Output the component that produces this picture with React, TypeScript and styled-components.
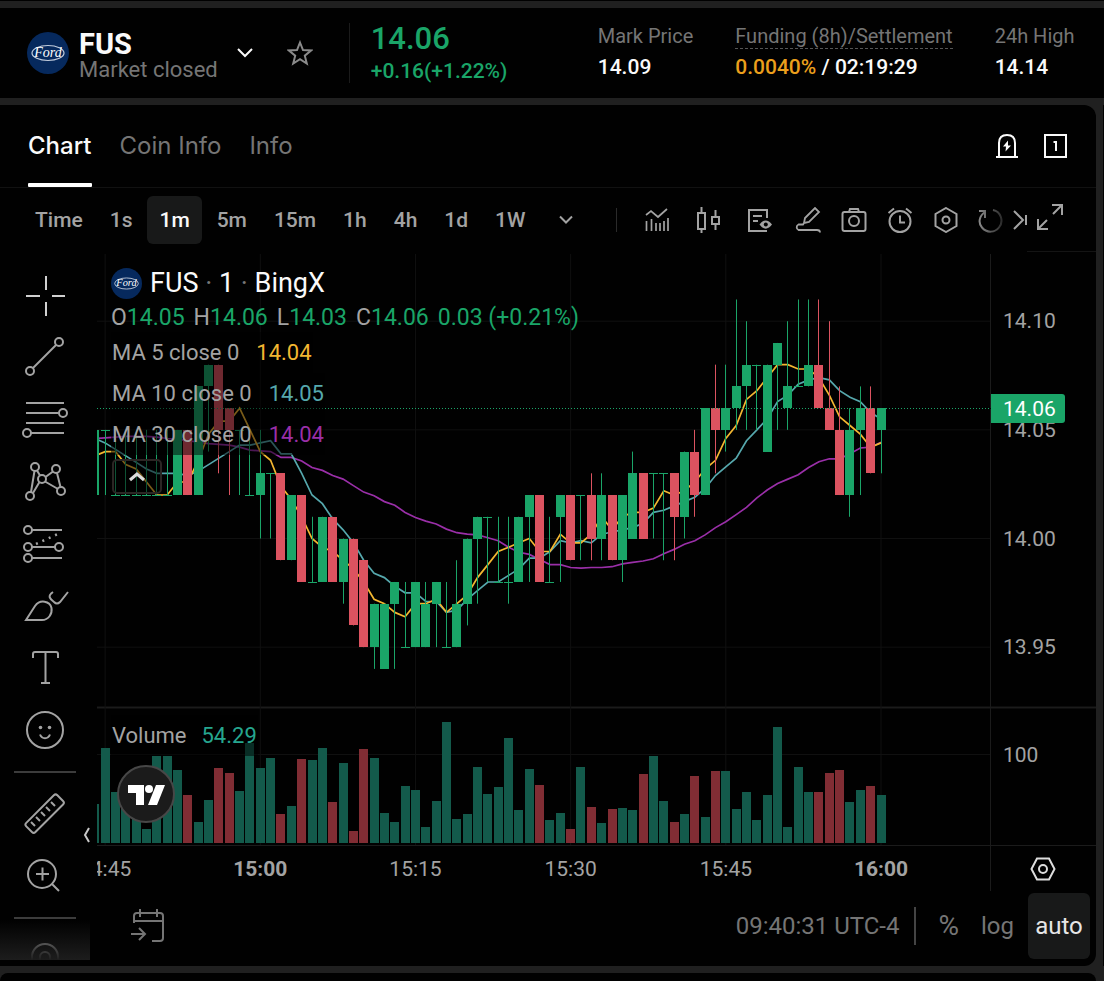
import React from "react";
import styled, { createGlobalStyle, css } from "styled-components";

const color = {
  gap: "#202020",
  panel: "#010101",
  line: "#1b1b1b",
  grid: "#101010",
  raised: "#181919",
  white: "#fafafa",
  text: "#a3a3a3",
  muted: "#757575",
  up: "#1aa568",
  down: "#dc5360",
  volUp: "#135a4b",
  volDown: "#812d34",
  ma5: "#f3b731",
  ma10: "#56a8ad",
  ma30: "#9a2fa8",
  orange: "#eb9f1c",
};

const GlobalStyle = createGlobalStyle`
  * { box-sizing: border-box; }
  body {
    margin: 0;
    background: ${color.gap};
    color: ${color.text};
    font-family: Roboto, "Liberation Sans", sans-serif;
    font-size: 22px;
    line-height: 28px;
  }
  button {
    font: inherit;
    color: inherit;
    background: none;
    border: 0;
    padding: 0;
    cursor: pointer;
  }
  svg { display: block; flex: none; }
`;

/* ---------- market data: cents above 14.00, volume in plot pixels ---------- */

type Candle = [open: number, high: number, low: number, close: number, volume: number];

const candles: Candle[] = [
  [2, 5, 2, 5, 39], [5, 5, 2, 5, 95], [2, 5, 2, 2, 51], [2, 5, 2, 2, 45], [2, 5, 2, 2, 38],
  [2, 5, 2, 2, 14], [2, 5, 2, 2, 87], [2, 5, 2, 2, 87], [2, 5, 2, 5, 73], [5, 5, 2, 2, 48],
  [2, 7, 2, 7, 21], [7, 8, 4, 8, 43], [8, 8, 3, 5, 75], [6, 6, 2, 5, 70], [5, 5, 2, 5, 52],
  [2, 5, 2, 2, 100], [2, 5, 0, 3, 75], [3, 3, 0, 3, 85], [3, 3, -1, -1, 29], [-1, 2, -1, 2, 37],
  [2, 2, -2, -2, 84], [-2, 1, -2, -2, 83], [-2, 1, -2, 1, 95], [1, 1, -2, -2, 41], [-2, 0, -3, 0, 80],
  [0, 0, -4, -4, 12], [-1, -1, -5, -5, 94], [-5, -3, -6, -3, 85], [-6, -3, -6, -3, 30], [-3, -2, -6, -2, 21],
  [-5, -2, -5, -5, 57], [-5, -2, -5, -2, 53], [-5, -2, -5, -3, 16], [-3, -2, -5, -2, 42], [-5, -2, -5, -5, 121],
  [-5, -1, -5, -3, 24], [-3, 0, -4, 0, 29], [0, 1, -3, 1, 76], [1, 1, -2, 1, 49], [-2, 1, -2, -2, 56],
  [-2, 1, -3, -2, 105], [-2, 1, -2, 1, 33], [1, 2, -2, 2, 74], [2, 2, -2, -2, 58], [-2, 1, -2, -2, 23],
  [1, 2, -2, 2, 30], [2, 2, -1, -1, 14], [2, 2, -1, 2, 76], [2, 3, -1, 0, 36], [0, 3, -1, 2, 20],
  [2, 2, -1, -1, 34], [-1, 2, -2, 2, 35], [0, 4, 0, 3, 33], [3, 3, 0, 0, 69], [3, 3, 0, 3, 87],
  [3, 3, -1, 3, 42], [3, 3, -1, 1, 21], [1, 4, 0, 4, 29], [4, 5, 1, 2, 67], [2, 6, 2, 6, 26],
  [6, 8, 3, 5, 72], [5, 8, 4, 6, 72], [6, 11, 5, 7, 34], [7, 10, 5, 8, 51], [8, 8, 5, 8, 23],
  [4, 8, 4, 8, 48], [8, 9, 5, 9, 116], [6, 10, 5, 7, 16], [7, 11, 7, 7, 76], [7, 11, 7, 8, 51],
  [8, 11, 6, 6, 51], [6, 10, 5, 5, 70], [5, 7, 2, 2, 73], [2, 6, 1, 5, 41], [5, 7, 2, 6, 53],
  [6, 7, 3, 3, 57], [5, 6, 3, 6, 48],
];

/* closes of the minutes before the first candle, oldest first */
const earlierCloses = [
  4, 1, 1, 2, 2, 3, 4, 6, 4, 9, 10, 6, 6, 8, 6, 4, 4, 7, 2, 3, 7, 5, 5, 5, 5, 4, 2, 5, 3,
];

const STEP = 10.345;
const LAST_X = -215;
const AXIS_X = -106;
const SPLIT_Y = 453;
const VOLUME_BASE = 589;
const HEIGHT = 637;

const xAt = (i: number) => LAST_X - (candles.length - 1 - i) * STEP;
const yAt = (cents: number) => 284.5 - cents * 21.73;

const closes = [...earlierCloses, ...candles.map((c) => c[3])];

function average(period: number) {
  return candles
    .map((_, i) => {
      const end = i + earlierCloses.length + 1;
      const part = closes.slice(Math.max(0, end - period), end);
      const mean = part.reduce((a, b) => a + b, 0) / part.length;
      return `${xAt(i).toFixed(1)},${yAt(mean).toFixed(1)}`;
    })
    .join(" ");
}

const timeMarks = [
  { label: "14:45", i: 1 },
  { label: "15:00", i: 16, bold: true },
  { label: "15:15", i: 31 },
  { label: "15:30", i: 46 },
  { label: "15:45", i: 61 },
  { label: "16:00", i: 76, bold: true },
];

const priceMarks = [
  { label: "14.10", cents: 10 },
  { label: "14.05", cents: 5 },
  { label: "14.00", cents: 0 },
  { label: "13.95", cents: -5 },
];

const PlotSvg = styled.svg`
  width: 100%;
  height: ${HEIGHT}px;
  font-size: 21px;
  fill: ${color.text};
`;

function Plot() {
  return (
    <PlotSvg role="img" aria-label="FUS price and volume">
      {priceMarks.map((m) => (
        <line key={m.label} x1="0" x2="100%" y1={yAt(m.cents)} y2={yAt(m.cents)} stroke={color.grid} />
      ))}
      <line x1="0" x2="100%" y1="500.5" y2="500.5" stroke={color.grid} />
      <line x1="0" x2="100%" y1={SPLIT_Y + 0.5} y2={SPLIT_Y + 0.5} stroke={color.line} strokeWidth="2" />
      <line x1="0" x2="100%" y1="591.5" y2="591.5" stroke={color.line} />
      <svg x="100%" overflow="visible">
        {timeMarks.map((m) => (
          <line key={m.label} x1={xAt(m.i)} x2={xAt(m.i)} y1="0" y2="591" stroke={color.grid} />
        ))}
        <g fill="none" strokeWidth="1.700">
          <polyline points={average(30)} stroke={color.ma30} />
          <polyline points={average(10)} stroke={color.ma10} />
          <polyline points={average(5)} stroke={color.ma5} />
        </g>
        {candles.map(([open, high, low, close, volume], i) => {
          const down = close < open;
          const x = Math.floor(xAt(i));
          const top = Math.round(yAt(Math.max(open, close)));
          const bottom = Math.round(yAt(Math.min(open, close)));
          return (
            <g key={i} fill={down ? color.down : color.up}>
              <rect x={x} y={yAt(high)} width="1" height={yAt(low) - yAt(high)} />
              <rect x={x - 4} y={top} width="9" height={Math.max(bottom - top, 1)} />
              <rect
                x={x - 4}
                y={VOLUME_BASE - volume}
                width="9"
                height={volume}
                fill={down ? color.volDown : color.volUp}
              />
            </g>
          );
        })}
        <rect x={AXIS_X} y="0" width="106" height="591" fill={color.panel} />
        <line x1={AXIS_X + 0.5} x2={AXIS_X + 0.5} y1="0" y2={HEIGHT} stroke={color.line} />
        <line x1={AXIS_X} x2="0" y1={SPLIT_Y + 0.5} y2={SPLIT_Y + 0.5} stroke={color.line} strokeWidth="2" />
        {priceMarks.map((m) => (
          <text key={m.label} x="-93" y={yAt(m.cents) + 7}>{m.label}</text>
        ))}
        <text x="-93" y="508">100</text>
        {timeMarks.map((m) => (
          <text key={m.label} x={xAt(m.i)} y="622" textAnchor="middle" fontWeight={m.bold ? 700 : 400}>
            {m.label}
          </text>
        ))}
      </svg>
      <line x1="0" x2="100%" y1="154.5" y2="154.5" stroke={color.up} strokeDasharray="1 2" />
      <svg x="100%" overflow="visible">
        <rect x={AXIS_X} y="154" width="106" height="1" fill={color.panel} />
        <path d="M-105 140h71a3 3 0 0 1 3 3v23a3 3 0 0 1-3 3h-71z" fill={color.up} />
        <text x="-93" y="162" fill="#fff">14.06</text>
      </svg>
    </PlotSvg>
  );
}

/* ---------- icons ---------- */

type IconProps = { w?: number; h?: number; stroke?: number; children: React.ReactNode };

function Icon({ w = 26, h = 26, stroke = 2, children }: IconProps) {
  return (
    <svg width={w} height={h} viewBox={`0 0 ${w} ${h}`} fill="none" stroke="currentColor" strokeWidth={stroke} aria-hidden="true">
      {children}
    </svg>
  );
}

function Brand({ size }: { size: number }) {
  return (
    <svg width={size} height={size} viewBox="0 0 42 42" aria-hidden="true">
      <circle cx="21" cy="21" r="21" fill="#06295d" />
      <ellipse cx="21" cy="21" rx="16" ry="7.5" fill="none" stroke="#c3cddd" strokeWidth="1.200" />
      <text x="21" y="25" textAnchor="middle" fontFamily="Liberation Serif, serif" fontStyle="italic" fontSize="14" fill="#fff">
        Ford
      </text>
    </svg>
  );
}

const barIcons = [
  {
    name: "Indicators", width: 52,
    art: <Icon><path d="M2 8l5-4 7 6 9-8M2.500 14v10M7.500 12v12M12 16v8M16 16v8M20 14v10M24 11v13" strokeWidth="1.700" /></Icon>,
  },
  {
    name: "Candle style", width: 52,
    art: <Icon><path d="M2 6h7v16H2zM5.500 0v6M5.500 22v4M16 10h7v7h-7zM19.500 3v7M19.500 17v6" /></Icon>,
  },
  {
    name: "Templates", width: 50,
    art: <Icon><path d="M20 11V3H2v21h18M6 9h9M6 14h5" /><path d="M12.500 17.500c4-5.500 8.500-5.500 12.500 0-4 5.500-8.500 5.500-12.500 0z" fill="currentColor" stroke="none" /><circle cx="18.800" cy="17.500" r="2" fill="#010101" stroke="none" /></Icon>,
  },
  {
    name: "Draw",
    art: <Icon><path d="M9 16l1-5L20 1l4 4-10 10zM9 16l-1 1.500H3.500a3 3 0 0 0 0 5.500H22q3 0 3 2.500" strokeWidth="1.800" /></Icon>,
  },
  {
    name: "Screenshot",
    art: <Icon><rect x="1.500" y="5" width="23" height="19" rx="2" /><path d="M8 5l1-3h8l1 3" /><circle cx="13" cy="14" r="5" /></Icon>,
  },
  {
    name: "Alert",
    art: <Icon><circle cx="13" cy="14.500" r="10.500" /><path d="M13 8.500v7h5M1.500 6L7 1.500M24.500 6L19 1.500" /></Icon>,
  },
  {
    name: "Settings",
    art: <Icon><path d="M13 1l10.500 6v12L13 25 2.500 19V7z" /><circle cx="13" cy="13" r="3.500" /></Icon>,
  },
];

const toolIcons = [
  { name: "Crosshair", art: <path d="M6 21h14M32 21h13M26 1v14M26 27v14" stroke="#d0d0d0" /> },
  { name: "Trend line", art: <><circle cx="39" cy="5" r="4" /><circle cx="10" cy="34" r="4" /><path d="M13 31L36 8" /></> },
  { name: "Fib retracement", art: <><path d="M6 4h38M6 14h33M6 24h38M11 34h33" /><circle cx="43" cy="14" r="4" /><circle cx="7" cy="34" r="4" /></> },
  { name: "Pattern", art: <><circle cx="15" cy="6" r="4" /><circle cx="36" cy="8" r="4" /><circle cx="22" cy="18" r="4" /><circle cx="41" cy="30" r="4" /><circle cx="10" cy="35" r="4" /><path d="M14.500 10L11 31M17 9.500l3 5M25.500 16L33 10.500M37 12l3.500 14M25 20.500L38 28M19.500 21L13 32" /></> },
  { name: "Prediction", art: <><circle cx="8" cy="7" r="4" /><circle cx="8" cy="24" r="4" /><circle cx="39" cy="24" r="4" /><circle cx="8" cy="35" r="4" /><path d="M12 7h30M12 24h23M12 35h30" /><path d="M16 21L40 10" strokeDasharray="2 5" strokeWidth="2.500" /></> },
  { name: "Brush", art: <path d="M6 35L15 21c5-7 15-5 16.500 2 1 6-3 12-9.500 12zM33 7c-6 4-3 7 1 10 2 2 4 2 6 0L48 7" /> },
  { name: "Text", art: <path d="M13 11V7q0-2 2-2h21q2 0 2 2v4M25.500 5v31M21 36h9" /> },
  { name: "Emoji", art: <><circle cx="25" cy="21" r="18" /><path d="M20 25.500c2 5 8 5 10 0" /><circle cx="20.500" cy="18.500" r="1.800" fill="currentColor" stroke="none" /><circle cx="29.500" cy="18.500" r="1.800" fill="currentColor" stroke="none" /></> },
];

const lowerTools = [
  { name: "Measure", art: <><rect x="3" y="14" width="44" height="13" rx="2.500" transform="rotate(-45 25 21)" /><path d="M11 29l4 4M16 24l4 4M21 19l4 4M26 14l4 4M31 9l4 4" /></> },
  { name: "Zoom", art: <><circle cx="22" cy="19" r="14" /><path d="M16 19h13M22.500 12.500v13M32 29l7 7" /></> },
];

/* ---------- page parts ---------- */

const Page = styled.div`
  min-height: 100vh;
  display: flex;
  flex-direction: column;
  gap: 7px;
  padding-top: 7px;
  border-top: 1px solid #000;
  overflow: hidden;
`;

const Header = styled.header`
  display: flex;
  align-items: center;
  height: 90px;
  flex: none;
  padding-left: 27px;
  background: ${color.panel};
  white-space: nowrap;
`;

const Pair = styled.div`
  display: flex;
  align-items: center;
  gap: 10px;
`;

const PairText = styled.div`
  padding-top: 5px;
`;

const PairName = styled.h1`
  margin: 0;
  font-size: 29px;
  line-height: 28px;
  font-weight: 700;
  color: ${color.white};
`;

const PairState = styled.p`
  margin: 0;
  line-height: 24px;
  color: ${color.muted};
`;

const HeaderButton = styled.button<{ $dim?: boolean }>`
  display: flex;
  justify-content: center;
  width: 55px;
  color: ${(p) => (p.$dim ? "#8a8a8a" : color.white)};
`;

const Price = styled.div`
  margin-left: 21px;
  width: 249px;
  height: 60px;
  padding-left: 21px;
  border-left: 1px solid ${color.line};
  color: ${color.up};
  font-weight: 500;
`;

const PriceNow = styled.div`
  font-size: 31px;
  line-height: 32px;
`;

const PriceChange = styled.div`
  font-size: 21px;
  line-height: 32px;
`;

const Stats = styled.dl`
  display: flex;
  gap: 42px;
  margin: 0;
  font-size: 20px;
`;

const StatLabel = styled.dt<{ $dashed?: boolean }>`
  line-height: 24px;
  color: ${color.muted};
  border-bottom: 1px ${(p) => (p.$dashed ? "dashed #555" : "solid transparent")};
`;

const StatValue = styled.dd`
  margin: 0;
  padding: 4px 0 2px;
  font-size: 21px;
  line-height: 28px;
  font-weight: 500;
  color: ${color.white};
`;

const Rate = styled.span`
  color: ${color.orange};
`;

const Workspace = styled.div`
  display: grid;
  grid-template-columns: minmax(0, 1fr) 1px;
  gap: 7px;
`;

const Side = styled.aside`
  background: ${color.panel};
`;

const Panel = styled.main`
  background: ${color.panel};
  border-radius: 0 12px 12px 0;
  padding-bottom: 6px;
  overflow: hidden;
`;

const NextPanel = styled.section`
  flex: 1;
  min-height: 8px;
  margin-right: 8px;
  background: ${color.panel};
  border-radius: 12px 12px 0 0;
`;

const TabBar = styled.nav`
  display: flex;
  align-items: stretch;
  gap: 28px;
  height: 83px;
  padding: 0 27px 0 28px;
  border-bottom: 1px solid #111;
`;

const Tab = styled.button<{ $active?: boolean }>`
  position: relative;
  font-family: Inter, Roboto, sans-serif;
  font-size: 24px;
  font-weight: ${(p) => (p.$active ? 500 : 400)};
  color: ${(p) => (p.$active ? color.white : color.muted)};
  ${(p) =>
    p.$active &&
    css`
      &::after {
        content: "";
        position: absolute;
        left: 0;
        right: 0;
        bottom: 0;
        height: 4px;
        border-radius: 1px;
        background: #fff;
      }
    `}
`;

const TabActions = styled.div`
  display: flex;
  align-items: center;
  gap: 24px;
  margin-left: auto;
  color: ${color.white};
`;

const ChartBar = styled.div`
  display: flex;
  align-items: center;
  height: 66px;
  padding: 0 0 2px 23px;
`;

const Intervals = styled.div`
  display: flex;
  gap: 3px;
`;

const Interval = styled.button<{ $active?: boolean }>`
  height: 48px;
  padding: 0 12px;
  border-radius: 6px;
  background: ${(p) => (p.$active ? color.raised : "none")};
  color: ${(p) => (p.$active ? color.white : color.text)};
  font-size: 21px;
  font-weight: 500;
`;

const BarDivider = styled.span`
  width: 1px;
  height: 24px;
  margin: 0 14px 0 22px;
  background: #2a2a2a;
`;

const BarButton = styled.button<{ $width?: number }>`
  display: flex;
  justify-content: center;
  width: ${(p) => p.$width ?? 46}px;
`;

const ExpandCell = styled.div`
  display: flex;
  align-items: center;
  align-self: stretch;
  width: 69px;
  margin-left: auto;
  padding: 0 0 6px 10px;
  border-bottom: 1px solid #141414;
`;

const Body = styled.div`
  display: grid;
  grid-template-columns: 90px minmax(0, 1fr);
  height: 706px;
`;

const Tools = styled.div`
  position: relative;
  padding-top: 11px;
  overflow: hidden;
`;

const Tool = styled.button`
  display: flex;
  align-items: center;
  justify-content: center;
  width: 90px;
  height: 62px;
`;

const ToolDivider = styled.hr`
  width: 62px;
  height: 2px;
  margin: 10px 14px;
  border: 0;
  background: #3c3c3c;
`;

const ToolFade = styled.div`
  position: absolute;
  left: 0;
  right: 0;
  bottom: 0;
  height: 40px;
  background: linear-gradient(transparent, #1d1d1d);
`;

const ChartColumn = styled.div`
  position: relative;
  padding-left: 7px;
`;

const Collapse = styled.button`
  position: absolute;
  left: -8px;
  top: 572px;
  color: #c8c8c8;
`;

const Legend = styled.div`
  position: absolute;
  left: 21px;
  top: 13px;
  display: flex;
  flex-direction: column;
  align-items: flex-start;
  white-space: nowrap;
`;

const Title = styled.h2`
  display: flex;
  align-items: center;
  gap: 8px;
  margin: 0;
  font-size: 27px;
  font-weight: 400;
  line-height: 32px;
  color: ${color.white};
`;

const Dot = styled.span`
  color: #777;
`;

const Quote = styled.div`
  display: flex;
  gap: 9px;
  margin-top: 4px;
  font-size: 23px;
  line-height: 29px;
`;

const Tint = styled.span<{ $c: string }>`
  color: ${(p) => p.$c};
`;

const Study = styled.div`
  display: flex;
  gap: 17px;
  padding: 0 1px;
  line-height: 41px;
  background: rgba(0, 0, 0, 0.5);
`;

const Fold = styled.button`
  display: flex;
  align-items: center;
  justify-content: center;
  width: 50px;
  height: 35px;
  margin: 4px 1px;
  border: 2px solid #2b2624;
  border-radius: 5px;
  background: rgba(0, 0, 0, 0.5);
  color: #ddd;
`;

const VolumeLegend = styled(Study)`
  position: absolute;
  left: 21px;
  top: 461px;
  gap: 15px;
`;

const Watermark = styled.a`
  position: absolute;
  left: 27px;
  top: 511px;
`;

const AxisSettings = styled.button`
  position: absolute;
  right: 40px;
  top: 602px;
  color: #ddd;
`;

const Footer = styled.footer`
  display: flex;
  align-items: center;
  height: 69px;
  padding: 0 6px 0 34px;
  font-size: 24px;
  color: ${color.muted};
`;

const Clock = styled.button`
  margin-left: auto;
  padding-right: 15px;
  border-right: 2px solid #444;
  line-height: 38px;
`;

const Scale = styled.button<{ $active?: boolean; $large?: boolean }>`
  height: 66px;
  margin-left: ${(p) => (p.$active ? 14 : 22)}px;
  font-size: ${(p) => (p.$large ? 28 : 24)}px;
  ${(p) =>
    p.$active &&
    css`
      width: 62px;
      border-radius: 6px;
      background: ${color.raised};
      color: #e6e6e6;
    `}
`;

const stats = [
  { label: "Mark Price", value: "14.09" },
  { label: "Funding (8h)/Settlement", value: " / 02:19:29", rate: "0.0040%", dashed: true },
  { label: "24h High", value: "14.14" },
];

const studies = [
  { name: "MA 5 close 0", value: "14.04", tint: color.ma5 },
  { name: "MA 10 close 0", value: "14.05", tint: color.ma10 },
  { name: "MA 30 close 0", value: "14.04", tint: color.ma30 },
];

export default function App() {
  return (
    <Page>
      <GlobalStyle />
      <Header>
        <Pair>
          <Brand size={42} />
          <PairText>
            <PairName>FUS</PairName>
            <PairState>Market closed</PairState>
          </PairText>
        </Pair>
        <HeaderButton aria-label="Choose market">
          <Icon w={18} h={12} stroke={2}><path d="M2 2l7 7 7-7" /></Icon>
        </HeaderButton>
        <HeaderButton aria-label="Favourite" $dim>
          <Icon><path d="M13 2.500l3 7.500 8 .5-6.200 5.200 2 7.800L13 19.200 6.200 23.500l2-7.800L2 10.500l8-.5z" /></Icon>
        </HeaderButton>
        <Price>
          <PriceNow>14.06</PriceNow>
          <PriceChange>+0.16(+1.22%)</PriceChange>
        </Price>
        <Stats>
          {stats.map((s) => (
            <div key={s.label}>
              <StatLabel $dashed={s.dashed}>{s.label}</StatLabel>
              <StatValue>
                {s.rate && <Rate>{s.rate}</Rate>}
                {s.value}
              </StatValue>
            </div>
          ))}
        </Stats>
      </Header>

      <Workspace>
        <Panel>
          <TabBar>
            <Tab $active>Chart</Tab>
            <Tab>Coin Info</Tab>
            <Tab>Info</Tab>
            <TabActions>
              <button aria-label="Price alert">
                <Icon w={24} h={26}>
                  <path d="M4 23V10q0-8 8-8t8 8v13M1 24h22" />
                  <path d="M13 7.500l-5 6h3l-.5 5 5.500-6h-3z" fill="currentColor" stroke="none" />
                </Icon>
              </button>
              <button aria-label="Layout">
                <Icon w={26} h={26}>
                  <path d="M2 2h21v22H2z" />
                  <path d="M10.500 9h2.500v9" />
                </Icon>
              </button>
            </TabActions>
          </TabBar>

          <ChartBar>
            <Intervals>
              {["Time", "1s", "1m", "5m", "15m", "1h", "4h", "1d", "1W"].map((t) => (
                <Interval key={t} $active={t === "1m"}>{t}</Interval>
              ))}
            </Intervals>
            <BarButton $width={56} aria-label="More intervals">
              <Icon w={14} h={10} stroke={2}><path d="M1 1.500l6 6 6-6" /></Icon>
            </BarButton>
            <BarDivider />
            {barIcons.map((b) => (
              <BarButton key={b.name} aria-label={b.name} $width={b.width}>{b.art}</BarButton>
            ))}
            <BarButton aria-label="Reset" $width={44}>
              <Icon>
                <defs>
                  <linearGradient id="reset-fade">
                    <stop offset="0" stopColor="#8a8a8a" />
                    <stop offset="1" stopColor="#2e2e2e" />
                  </linearGradient>
                </defs>
                <path d="M7 5C1 9 0 16 4 20.500c5 6 13 5 17 0 5-6 2-16-6-17.500M1 4h6v7" stroke="url(#reset-fade)" />
              </Icon>
            </BarButton>
            <button aria-label="Scroll right">
              <Icon w={14} h={24}><path d="M1 3l9 9-9 9M13 7v10" /></Icon>
            </button>
            <ExpandCell>
              <BarButton aria-label="Full screen" $width={26}>
                <Icon><path d="M15 1h10v10M25 1l-9 9M1 15v10h10M1 25l9-9" /></Icon>
              </BarButton>
            </ExpandCell>
          </ChartBar>

          <Body>
            <Tools>
              {toolIcons.map((t) => (
                <Tool key={t.name} aria-label={t.name}><Icon w={50} h={42}>{t.art}</Icon></Tool>
              ))}
              <ToolDivider />
              {lowerTools.map((t) => (
                <Tool key={t.name} aria-label={t.name}><Icon w={50} h={42}>{t.art}</Icon></Tool>
              ))}
              <ToolDivider />
              <Tool aria-label="Magnet">
                <Icon w={50} h={42}><path d="M12 30V18a13 13 0 0 1 26 0v12M20 30V18a5 5 0 0 1 10 0v12" /></Icon>
              </Tool>
              <ToolFade />
            </Tools>

            <ChartColumn>
              <Plot />
              <Collapse aria-label="Hide drawing tools">
                <Icon w={10} h={18}><path d="M7 2L3 9l4 7" /></Icon>
              </Collapse>
              <Legend>
                <Title>
                  <Brand size={31} />
                  <span>FUS <Dot>·</Dot> 1 <Dot>·</Dot> BingX</span>
                </Title>
                <Quote>
                  <span>O<Tint $c={color.up}>14.05</Tint></span>
                  <span>H<Tint $c={color.up}>14.06</Tint></span>
                  <span>L<Tint $c={color.up}>14.03</Tint></span>
                  <span>C<Tint $c={color.up}>14.06</Tint></span>
                  <Tint $c={color.up}>0.03 (+0.21%)</Tint>
                </Quote>
                {studies.map((s) => (
                  <Study key={s.name}>
                    <span>{s.name}</span>
                    <Tint $c={s.tint}>{s.value}</Tint>
                  </Study>
                ))}
                <Fold aria-label="Collapse legend">
                  <Icon w={16} h={10} stroke={3}><path d="M1 8l7-6 7 6" /></Icon>
                </Fold>
              </Legend>
              <VolumeLegend>
                <span>Volume</span>
                <Tint $c="#26a68f">54.29</Tint>
              </VolumeLegend>
              <Watermark href="#" aria-label="TradingView">
                <svg width="58" height="58" viewBox="0 0 58 58">
                  <circle cx="29" cy="29" r="28" fill="#1b1b1b" stroke="#474747" strokeWidth="2" />
                  <path d="M11 20h16v20h-8V28h-8zM39 20h9l-8 20h-9z" fill="#fff" />
                  <circle cx="32" cy="24" r="4" fill="#fff" />
                </svg>
              </Watermark>
              <AxisSettings aria-label="Axis settings">
                <Icon w={26} h={26}><path d="M1.500 13L7 2.500h12L24.500 13 19 23.500H7z" /><circle cx="13" cy="13" r="4" /></Icon>
              </AxisSettings>
              <Footer>
                <button aria-label="Go to date">
                  <Icon w={34} h={34}><path d="M3 14V7q0-3 3-3h23q3 0 3 3v22q0 3-3 3h-8M3 12h29M9 0v8M26 0v8M0 25h13M8 19l6 6-6 6" /></Icon>
                </button>
                <Clock>09:40:31 UTC-4</Clock>
                <Scale $large>%</Scale>
                <Scale>log</Scale>
                <Scale $active>auto</Scale>
              </Footer>
            </ChartColumn>
          </Body>
        </Panel>
        <Side />
      </Workspace>
      <NextPanel />
    </Page>
  );
}
